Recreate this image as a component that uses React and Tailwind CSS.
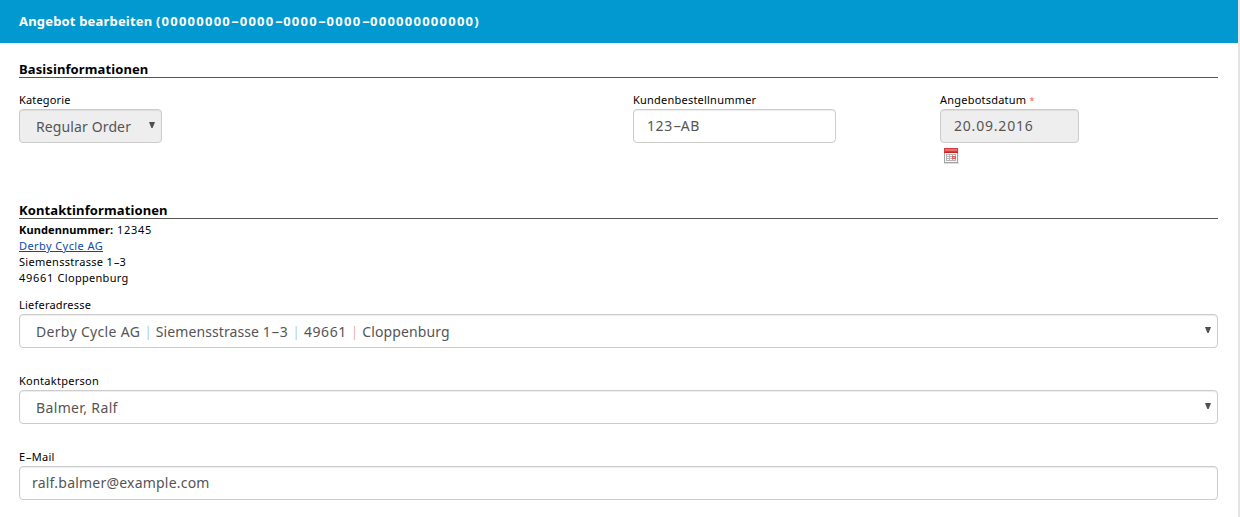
import React from "react";

function Dash({ className }) {
  return <span className={`inline-block text-center tracking-normal ${className}`}><span className="inline-block scale-x-[1.8]">-</span></span>;
}

function Pipe({ className = "text-[#8fb9de]" }) {
  return <span className={`font-light ${className}`}>|</span>;
}

function SectionTitle({ children }) {
  return <h2 className="h-[18px] w-[1199px] border-b border-[#555] text-[13px] font-bold leading-[18px] tracking-[0.11px] text-black">{children}</h2>;
}

function Label({ className = "tracking-[0.22px]", children }) {
  return <div className={`h-[17px] whitespace-nowrap text-[11px] leading-4 text-black ${className}`}>{children}</div>;
}

function Box({ className, children }) {
  return (
    <div className={`flex h-[34px] items-center justify-between whitespace-pre rounded-[4px] border border-[#ccc] text-[14px] leading-5 text-[#555] shadow-[inset_0_1px_1px_rgba(0,0,0,0.075)] ${className}`}>
      {children}
    </div>
  );
}

function Caret() {
  return (
    <svg className="mb-[2px] mr-[6px] shrink-0" width="6" height="6" viewBox="0 0 6 6">
      <path d="M0 0H6L3.6 6H2.4Z" fill="#505050" />
    </svg>
  );
}

function CalendarIcon() {
  return (
    <svg className="ml-1 mt-[5px]" width="16" height="16" viewBox="0 0 16 16" shapeRendering="crispEdges">
      <rect x="0" y="15" width="15" height="1" fill="#ddd" />
      <rect x="14" y="1" width="1" height="14" fill="#eee" />
      <rect x="0" y="5" width="14" height="10" fill="#a3a3a3" />
      <rect x="1" y="5" width="12" height="9" fill="#f7f7f7" />
      <rect x="0" y="0" width="14" height="5" fill="#d23c3c" />
      <rect x="1" y="1" width="12" height="2" fill="#ec6c6c" />
      <rect x="0" y="4" width="14" height="1" fill="#c02626" />
      <rect x="2" y="6" width="10" height="7" fill="#b4b4b4" />
      <path d="M3 7h2v1H3zM6 7h2v1H6zM9 7h2v1H9zM3 9h2v1H3zM6 9h2v1H6zM3 11h2v1H3zM6 11h2v1H6zM9 11h2v1H9z" fill="#fff" />
      <rect x="8" y="8" width="4" height="3" fill="#e65c5c" />
      <rect x="9" y="9" width="2" height="1" fill="#f9a0a0" />
    </svg>
  );
}

export default function App() {
  return (
    <div className="h-[517px] w-[1240px] overflow-hidden border-r-2 border-[#e4e4e4] bg-white font-['Noto_Sans',sans-serif]">
      <header className="flex h-[43px] items-center whitespace-pre bg-[#0299d0] pl-[19px] text-[13px] font-bold text-white">
        <span className="tracking-[0.18px]">Angebot bearbeiten </span>
        <span className="tracking-[1.25px]">
          (00000000<Dash className="w-[8.7px]" />0000<Dash className="w-[8.7px]" />0000<Dash className="w-[8.7px]" />0000<Dash className="w-[8.7px]" />000000000000)
        </span>
      </header>
      <main className="pl-[19px] pt-[17px]">
        <SectionTitle>Basisinformationen</SectionTitle>
        <div className="mt-[14px] grid h-[109px] w-[1228px] grid-cols-4 items-start">
          <div className="col-span-2">
            <Label className="tracking-[0.16px]">Kategorie</Label>
            <Box className="w-[143px] bg-[#eee] pl-4"><span className="pt-[2px] tracking-[0.12px]">Regular Order</span><Caret /></Box>
          </div>
          <div>
            <Label>Kundenbestellnummer</Label>
            <Box className="w-[203px] pl-[13px]"><span className="tracking-[0.6px]">123<Dash className="w-[8px]" />AB</span></Box>
          </div>
          <div>
            <Label>Angebotsdatum <span className="text-[9px] text-[#f55]">*</span></Label>
            <Box className="w-[139px] bg-[#eee] pl-[13px]"><span className="tracking-[0.8px]">20.09.2016</span></Box>
            <CalendarIcon />
          </div>
        </div>
        <SectionTitle>Kontaktinformationen</SectionTitle>
        <div className="mt-[3px] text-[11px] leading-4 text-black">
          <p><b className="tracking-[0.12px]">Kundennummer:</b> <span className="ml-px tracking-[0.7px]">12345</span></p>
          <p><a className="tracking-[0.41px] text-[#0b49b0] underline">Derby Cycle AG</a></p>
          <p className="tracking-[0.3px]">Siemensstrasse <span className="tracking-[0.7px]">1<Dash className="w-[6px]" />3</span></p>
          <p><span className="tracking-[0.7px]">49661 </span><span className="tracking-[0.3px]">Cloppenburg</span></p>
        </div>
        <div className="mt-[11px] flex w-[1199px] flex-col gap-[25px]">
          <div>
            <Label>Lieferadresse</Label>
            <Box className="pl-4">
              <span className="pt-[2px] tracking-[0.18px]"><span className="tracking-[0.32px]">Derby Cycle AG </span><Pipe /><span className="tracking-[0.1px]"> Siemensstrasse </span><span className="tracking-[0.8px]">1<Dash className="w-[8px]" />3</span> <Pipe /> <span className="tracking-[0.6px]">49661</span> <Pipe className="text-[#d89a94]" /><span className="tracking-[0.1px]"> Cloppenburg</span></span>
              <Caret />
            </Box>
          </div>
          <div>
            <Label className="tracking-[0.27px]">Kontaktperson</Label>
            <Box className="pl-4"><span className="pt-[2px] tracking-[0.36px]">Balmer, Ralf</span><Caret /></Box>
          </div>
          <div>
            <Label>E<Dash className="w-[6.5px]" />Mail</Label>
            <Box className="pl-3"><span className="tracking-[0.21px]">ralf.balmer@example.com</span></Box>
          </div>
        </div>
      </main>
    </div>
  );
}
